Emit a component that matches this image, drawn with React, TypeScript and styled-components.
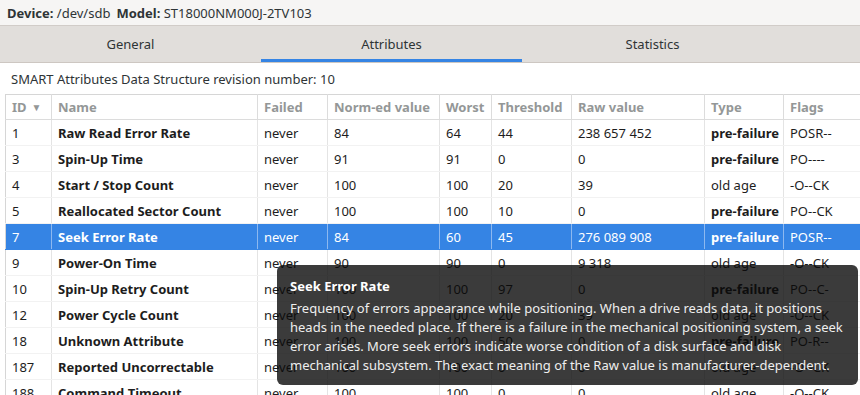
import React from "react";
import styled, { createGlobalStyle } from "styled-components";

const GlobalStyle = createGlobalStyle`
  html, body {
    margin: 0;
    padding: 0;
    background: #ffffff;
  }
  body {
    font-family: "Noto Sans", "Open Sans", sans-serif;
    font-size: 13px;
    color: #2e3436;
    overflow: hidden;
  }
`;

const Window = styled.div`
  position: relative;
  width: 860px;
  height: 395px;
  overflow: hidden;
  display: flex;
  flex-direction: column;
  background: #ffffff;
`;

const DeviceBar = styled.div`
  height: 25px;
  flex: none;
  display: flex;
  align-items: center;
  padding-left: 7px;
  background: #f6f5f4;
  border-bottom: 1px solid #d1ccc8;
  gap: 6px;
  white-space: nowrap;
`;

const Label = styled.b`
  font-weight: 700;
`;

const TabBar = styled.div`
  height: 36px;
  flex: none;
  display: flex;
  background: #e1dedb;
  border-bottom: 1px solid #cdc7c2;
`;

const Tab = styled.div<{ $active?: boolean }>`
  width: 261px;
  flex: none;
  display: flex;
  align-items: center;
  justify-content: center;
  color: #2e3436;
  box-shadow: ${(p) => (p.$active ? "inset 0 -3px 0 #3584e4" : "none")};
`;

const Content = styled.div`
  flex: 1;
  display: flex;
  flex-direction: column;
  padding: 0 0 0 5px;
`;

const Revision = styled.div`
  height: 31px;
  flex: none;
  display: flex;
  align-items: center;
  padding-left: 6px;
  color: #2e3436;
`;

const Table = styled.table`
  border-collapse: collapse;
  table-layout: fixed;
  width: 930px;
  border-top: 1px solid #d6d6d6;
  border-left: 1px solid #d6d6d6;
`;

const HeadCell = styled.th`
  height: 24px;
  padding: 0 6px;
  text-align: left;
  font-weight: 700;
  color: #949797;
  border-right: 1px solid #dcdcdc;
  border-bottom: 1px solid #dcdcdc;
  white-space: nowrap;
  overflow: hidden;
`;

const SortArrow = styled.span`
  display: inline-block;
  margin-left: 5px;
  font-size: 10px;
  vertical-align: 1px;
  color: #949797;
`;

const Row = styled.tr<{ $selected?: boolean }>`
  background: ${(p) => (p.$selected ? "#3584e4" : "#ffffff")};
  color: ${(p) => (p.$selected ? "#ffffff" : "#1d1d1d")};
`;

const Cell = styled.td<{ $bold?: boolean; $selected?: boolean }>`
  height: 25px;
  padding: 0 6px;
  font-weight: ${(p) => (p.$bold ? 700 : 400)};
  border-right: 1px solid ${(p) => (p.$selected ? "#8db8ef" : "#e4e4e4")};
  border-bottom: 1px solid ${(p) => (p.$selected ? "#3584e4" : "#f2f2f2")};
  white-space: nowrap;
  overflow: hidden;
`;

const Tooltip = styled.div`
  position: absolute;
  left: 277px;
  top: 265px;
  width: 581px;
  height: 120px;
  box-sizing: border-box;
  padding: 12px 12px 0 13px;
  border-radius: 6px;
  background: rgba(10, 10, 10, 0.8);
  color: #f2f2f2;
  line-height: 19px;
`;

const TooltipTitle = styled.div`
  font-weight: 700;
  color: #ffffff;
  margin-bottom: 3px;
`;

const TooltipBody = styled.div`
  color: #eeeeee;
`;

const columns = [
  { title: "ID", width: 46 },
  { title: "Name", width: 206 },
  { title: "Failed", width: 70 },
  { title: "Norm-ed value", width: 112 },
  { title: "Worst", width: 52 },
  { title: "Threshold", width: 80 },
  { title: "Raw value", width: 133 },
  { title: "Type", width: 79 },
  { title: "Flags", width: 152 },
];

type Attr = [string, string, string, string, string, string, string, string, string];

const rows: Attr[] = [
  ["1", "Raw Read Error Rate", "never", "84", "64", "44", "238 657 452", "pre-failure", "POSR--"],
  ["3", "Spin-Up Time", "never", "91", "91", "0", "0", "pre-failure", "PO----"],
  ["4", "Start / Stop Count", "never", "100", "100", "20", "39", "old age", "-O--CK"],
  ["5", "Reallocated Sector Count", "never", "100", "100", "10", "0", "pre-failure", "PO--CK"],
  ["7", "Seek Error Rate", "never", "84", "60", "45", "276 089 908", "pre-failure", "POSR--"],
  ["9", "Power-On Time", "never", "90", "90", "0", "9 318", "old age", "-O--CK"],
  ["10", "Spin-Up Retry Count", "never", "100", "100", "97", "0", "pre-failure", "PO--C-"],
  ["12", "Power Cycle Count", "never", "100", "100", "20", "39", "old age", "-O--CK"],
  ["18", "Unknown Attribute", "never", "100", "100", "50", "0", "pre-failure", "PO-R--"],
  ["187", "Reported Uncorrectable", "never", "100", "100", "0", "0", "old age", "-O--CK"],
  ["188", "Command Timeout", "never", "100", "100", "0", "0", "old age", "-O--CK"],
];

export default function App() {
  return (
    <Window>
      <GlobalStyle />
      <DeviceBar>
        <span>
          <Label>Device:</Label> /dev/sdb
        </span>
        <span>
          <Label>Model:</Label> ST18000NM000J-2TV103
        </span>
      </DeviceBar>
      <TabBar>
        <Tab>General</Tab>
        <Tab $active>Attributes</Tab>
        <Tab>Statistics</Tab>
      </TabBar>
      <Content>
        <Revision>SMART Attributes Data Structure revision number: 10</Revision>
        <Table>
          <colgroup>
            {columns.map((c) => (
              <col key={c.title} style={{ width: c.width }} />
            ))}
          </colgroup>
          <thead>
            <tr>
              {columns.map((c, i) => (
                <HeadCell key={c.title}>
                  {c.title}
                  {i === 0 && <SortArrow>▼</SortArrow>}
                </HeadCell>
              ))}
            </tr>
          </thead>
          <tbody>
            {rows.map((r) => {
              const sel = r[0] === "7";
              return (
                <Row key={r[0]} $selected={sel}>
                  {r.map((v, i) => (
                    <Cell
                      key={i}
                      $selected={sel}
                      $bold={i === 1 || (i === 7 && v === "pre-failure")}
                    >
                      {v}
                    </Cell>
                  ))}
                </Row>
              );
            })}
          </tbody>
        </Table>
      </Content>
      <Tooltip>
        <TooltipTitle>Seek Error Rate</TooltipTitle>
        <TooltipBody>
          Frequency of errors appearance while positioning. When a drive reads data, it positions
          heads in the needed place. If there is a failure in the mechanical positioning system, a
          seek error arises. More seek errors indicate worse condition of a disk surface and disk
          mechanical subsystem. The exact meaning of the Raw value is manufacturer-dependent.
        </TooltipBody>
      </Tooltip>
    </Window>
  );
}
